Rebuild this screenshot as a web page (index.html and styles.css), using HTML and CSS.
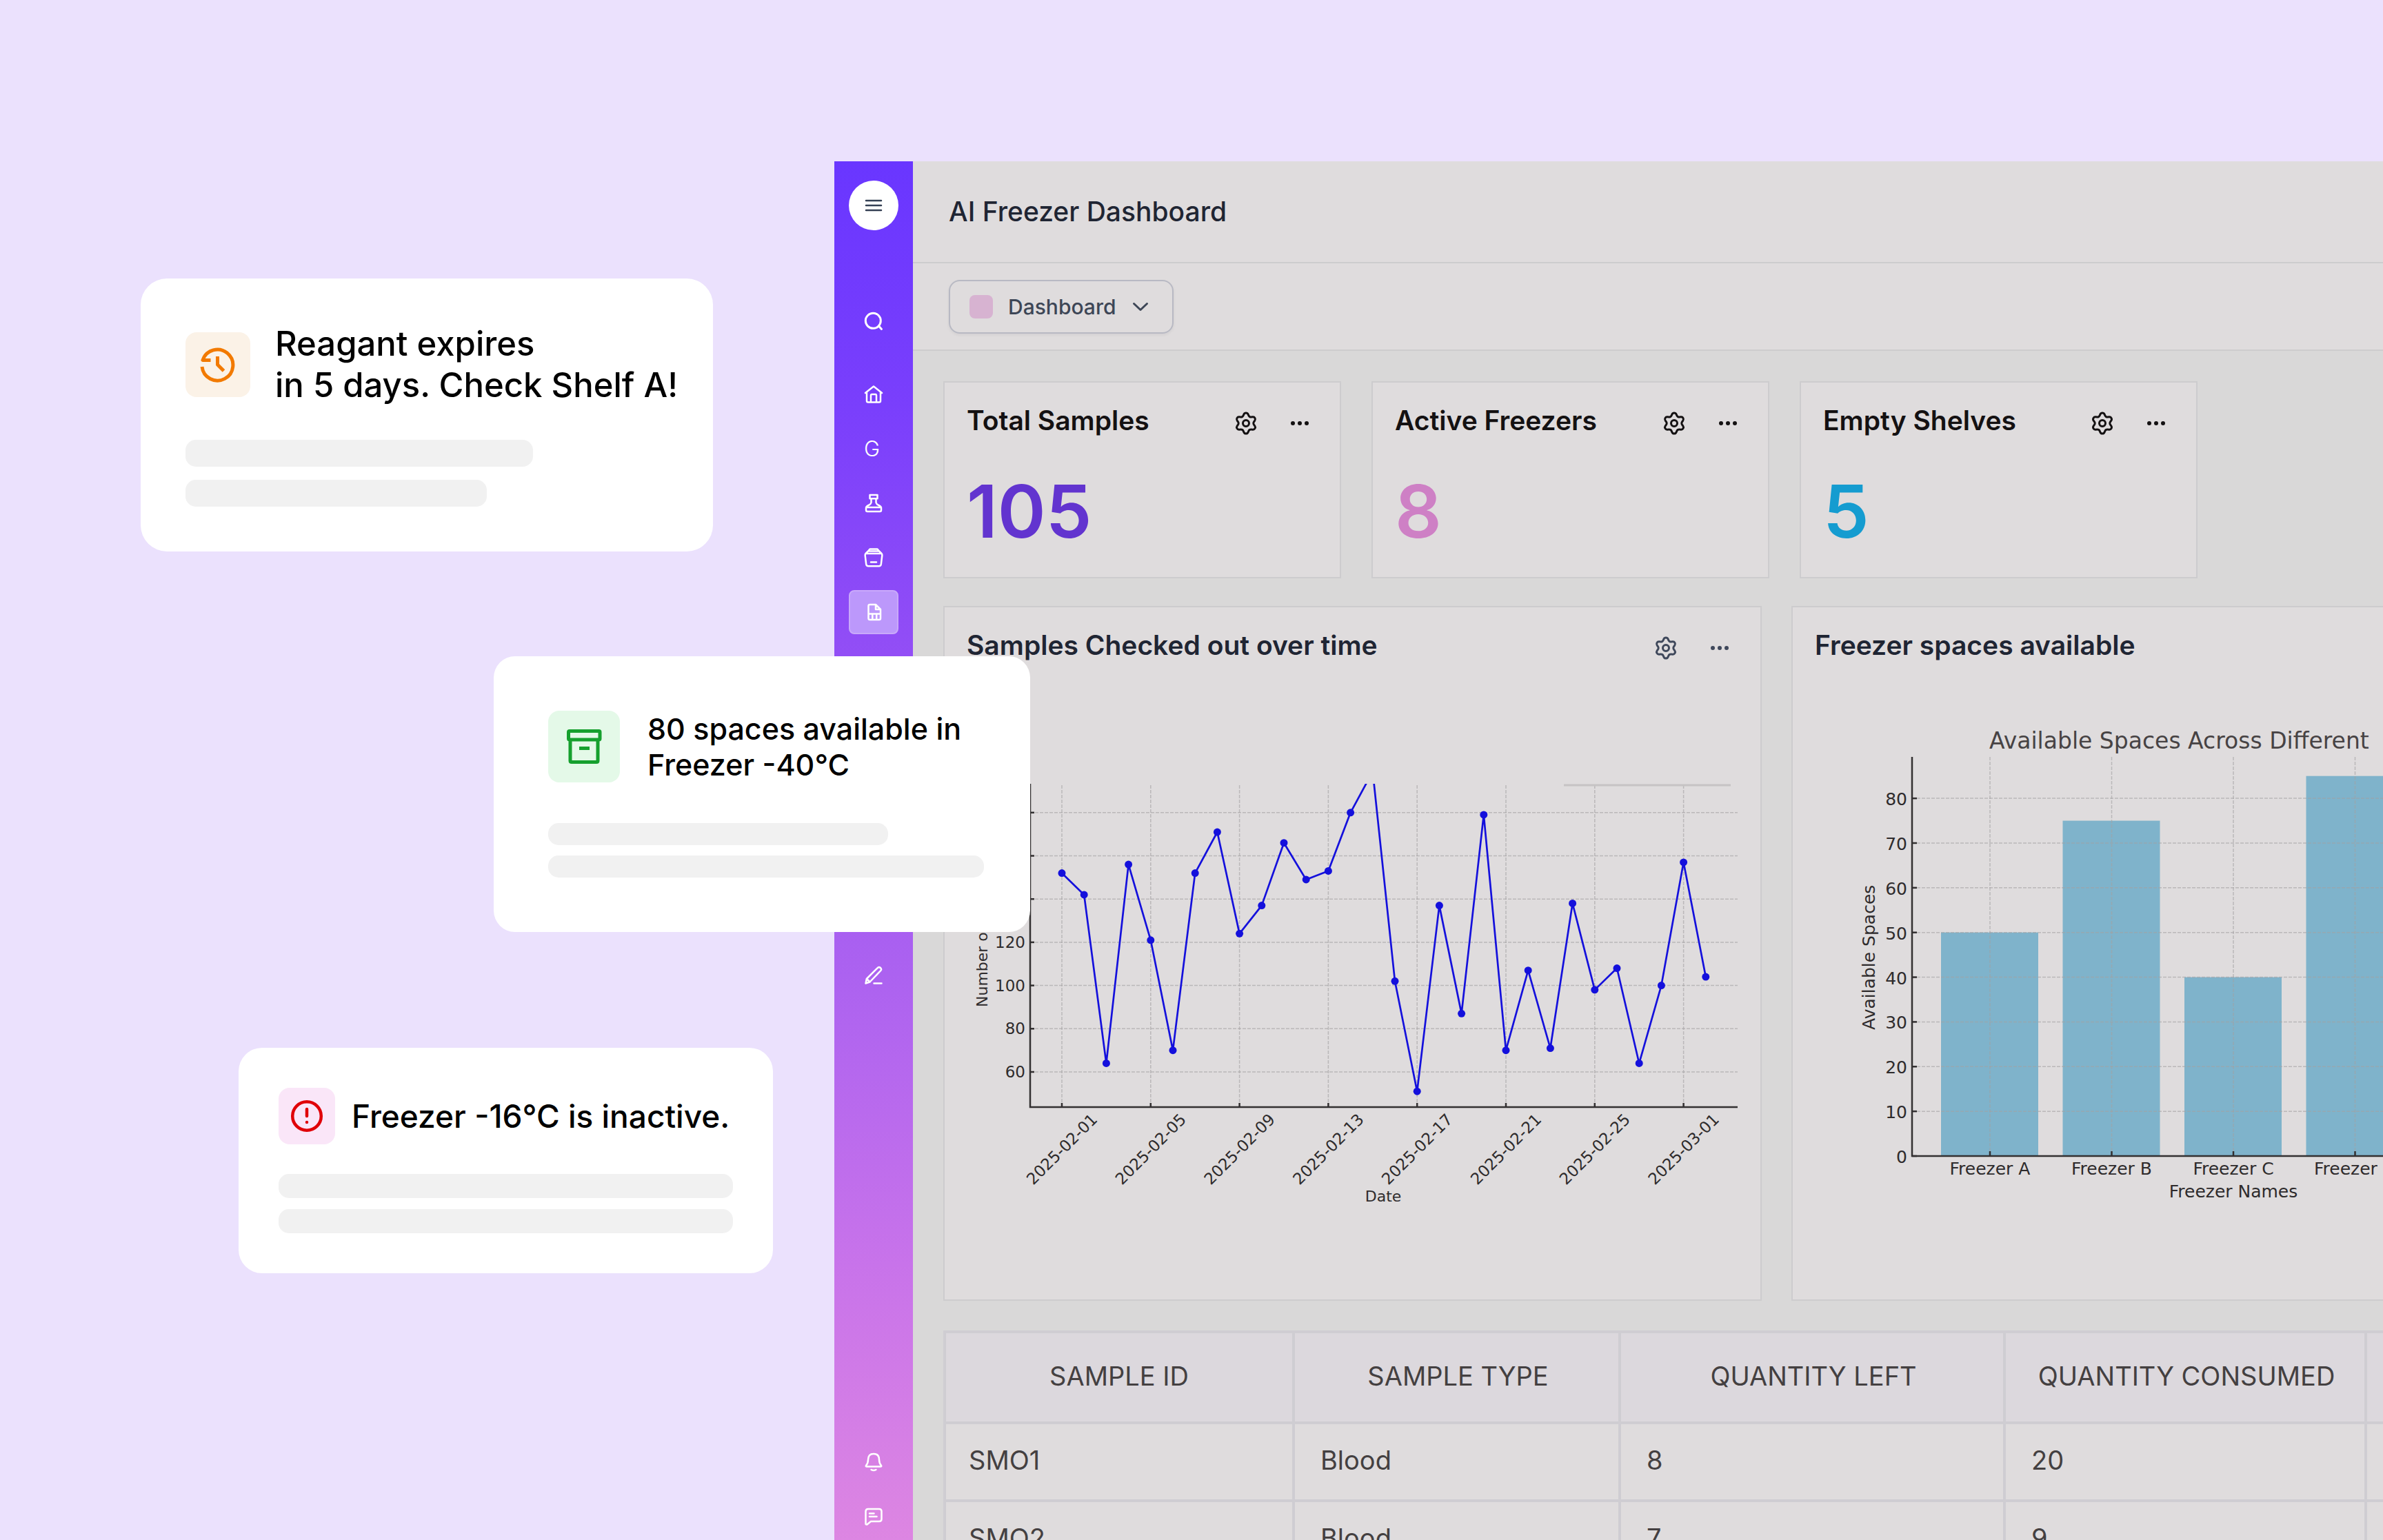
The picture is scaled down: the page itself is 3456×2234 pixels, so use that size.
FILE: index.html
```html
<!DOCTYPE html>
<html lang="en">
<head>
<meta charset="utf-8">
<meta name="viewport" content="width=device-width, initial-scale=1">
<title>AI Freezer Dashboard</title>
<link rel="stylesheet" href="styles.css">
</head>
<body>
<svg class="sprite" aria-hidden="true">
  <symbol id="gear" viewBox="0 0 24 24">
    <path d="M9.395 19.371l.585 1.315a2.214 2.214 0 0 0 4.044 0l.584-1.315a2.43 2.43 0 0 1 1-1.111 2.43 2.43 0 0 1 1.476-.312l1.43.152a2.214 2.214 0 0 0 2.149-1.094 2.214 2.214 0 0 0-.126-2.408l-.847-1.164A2.43 2.43 0 0 1 19.224 12c0-.513.163-1.014.464-1.429l.847-1.163a2.214 2.214 0 0 0 .126-2.408 2.214 2.214 0 0 0-2.149-1.094l-1.43.152a2.43 2.43 0 0 1-1.47-.312 2.43 2.43 0 0 1-1-1.117l-.588-1.315a2.214 2.214 0 0 0-4.044 0l-.585 1.315a2.43 2.43 0 0 1-1 1.117 2.43 2.43 0 0 1-1.47.312l-1.434-.152A2.214 2.214 0 0 0 3.342 7a2.214 2.214 0 0 0 .126 2.408l.847 1.163c.302.415.464.916.464 1.429s-.162 1.014-.464 1.429l-.847 1.163A2.214 2.214 0 0 0 3.342 17a2.214 2.214 0 0 0 2.149 1.094l1.43-.152a2.43 2.43 0 0 1 1.47.312c.444.257.796.648 1.004 1.117z"/>
    <circle cx="12" cy="12" r="3"/>
  </symbol>
  <symbol id="dots" viewBox="0 0 36 36">
    <circle cx="8" cy="18" r="3"/><circle cx="18" cy="18" r="3"/><circle cx="28" cy="18" r="3"/>
  </symbol>
</svg>

<div class="page">
  <aside class="alerts" aria-label="Alerts">
    <article class="alert alert-reagent">
      <div class="alert-head">
        <span class="alert-icon">
          <svg viewBox="0 0 94 94" aria-hidden="true"><path d="M24 50A22.500 22.500 0 1 0 25 40.500H36.500M46.500 35v12l9 9"/></svg>
        </span>
        <p class="alert-text">Reagant expires<br>in 5 days. Check Shelf A!</p>
      </div>
      <span class="bar bar-long"></span>
      <span class="bar bar-short"></span>
    </article>
    <article class="alert alert-space">
      <div class="alert-head">
        <span class="alert-icon">
          <svg viewBox="0 0 104 104" aria-hidden="true"><path d="M31 29.500h42.500q1.500 0 1.500 1.500v9.500q0 1.500-1.500 1.500H31q-1.500 0-1.500-1.500V31q0-1.500 1.500-1.500zM32 42v30.500q0 2 2 2h36q2 0 2-2V42M45 54.500h15"/></svg>
        </span>
        <p class="alert-text">80 spaces available in<br>Freezer -40°C</p>
      </div>
      <span class="bar bar-short"></span>
      <span class="bar bar-long"></span>
    </article>
    <article class="alert alert-inactive">
      <div class="alert-head">
        <span class="alert-icon">
          <svg viewBox="0 0 82 82" aria-hidden="true"><circle cx="41" cy="41" r="20.800"/><path d="M41 31v10M41 50v.1"/></svg>
        </span>
        <p class="alert-text">Freezer -16°C is inactive.</p>
      </div>
      <span class="bar bar-long"></span>
      <span class="bar bar-long"></span>
    </article>
  </aside>

  <div class="app">
    <nav class="sidebar" aria-label="Main">
      <button class="menu-button" type="button" aria-label="Menu">
        <svg viewBox="0 0 28 28" aria-hidden="true"><path d="M3 7h22M3 14h22M3 21h22"/></svg>
      </button>
      <a class="nav-item nav-search" href="#" aria-label="Search">
        <svg viewBox="0 0 28 28" aria-hidden="true"><circle cx="13.300" cy="13.300" r="11"/><path d="M21.500 21l4 4.500"/></svg>
      </a>
      <div class="nav-group">
        <a class="nav-item" href="#" aria-label="Home">
          <svg viewBox="0 0 28 28" aria-hidden="true"><path d="M2 12L14 2.500 26 12M4 11v12.500q0 2 2 2h16q2 0 2-2V11M10 25V15.500q0-1.500 1.500-1.500h5q1.500 0 1.500 1.500V25"/></svg>
        </a>
        <a class="nav-item" href="#"><span class="nav-letter">G</span></a>
        <a class="nav-item" href="#" aria-label="Samples">
          <svg viewBox="0 0 28 28" aria-hidden="true"><path d="M8.500 2h11v5.300h-11zM10.500 7.300V13q-.5 2-3 3.500-4.500 2-4.500 4.500v3q0 2 2 2h18q2 0 2-2v-3q0-2.500-4.500-4.500-2.500-1.500-3-3.500V7.300M3 20h22"/></svg>
        </a>
        <a class="nav-item" href="#" aria-label="Storage">
          <svg viewBox="0 0 28 28" aria-hidden="true"><path d="M8.500 1.500h11l2.500 3H6zM6 4.500L2.500 8h23L22 4.500M2.500 8q-1 1-.8 3l1.500 12.500q.5 2.800 3 2.800h15.600q2.500 0 3-2.800l1.500-12.500q.2-2-.8-3M10 20.500h8"/></svg>
        </a>
        <a class="nav-item nav-current" href="#" aria-label="Dashboards" aria-current="page">
          <svg viewBox="0 0 28 28" aria-hidden="true"><path d="M8.500 3h8.500l7 7v13q0 2-2 2H8.500q-2 0-2-2V5q0-2 2-2zM17 3v7h7M6.500 16.500H24M12.300 16.500V25M18.200 16.500V25"/></svg>
        </a>
        <a class="nav-item" href="#" aria-label="Reports">
          <svg viewBox="0 0 28 28" aria-hidden="true"><circle cx="14" cy="13.500" r="13"/></svg>
        </a>
      </div>
      <a class="nav-item nav-edit" href="#" aria-label="Edit">
        <svg viewBox="0 0 28 28" aria-hidden="true"><path d="M2.500 25.500l1.300-6.500L20 2.800q2-1.500 4 .2 2 2.200.3 4L8.500 23.500zM4 19l4.500 4.500M14.500 25.500h11"/></svg>
      </a>
      <div class="nav-group nav-bottom">
        <a class="nav-item" href="#" aria-label="Notifications">
          <svg viewBox="0 0 28 28" aria-hidden="true"><path d="M6 10.500Q6 2 14 2t8 8.500q0 5 3 8.500.8 1.500-1 1.500H4q-1.800 0-1-1.500 3-3.500 3-8.500zM10.500 25q3.500 2 7 0"/></svg>
        </a>
        <a class="nav-item" href="#" aria-label="Messages">
          <svg viewBox="0 0 28 28" aria-hidden="true"><path d="M6 3h16q3.500 0 3.500 3.500v11q0 3.500-3.500 3.500H10l-5.500 4.500q-1.800.5-2-1V6.500Q2.500 3 6 3zM8 9.500h6.500M8 14h10.500"/></svg>
        </a>
      </div>
    </nav>

    <main class="main">
      <header class="topbar"><h1 class="page-title">AI Freezer Dashboard</h1></header>
      <div class="toolbar">
        <button class="picker" type="button">
          <span class="swatch"></span>
          <span>Dashboard</span>
          <svg viewBox="0 0 24 24" aria-hidden="true"><path d="M2.500 7.500L12 16.500l9.500-9"/></svg>
        </button>
      </div>

      <div class="board">
        <section class="stats">
          <article class="card stat">
            <div class="card-head">
              <h2>Total Samples</h2>
              <div class="card-actions">
                <button type="button" aria-label="Settings"><svg class="gear"><use href="#gear"/></svg></button>
                <button type="button" aria-label="More"><svg class="dots"><use href="#dots"/></svg></button>
              </div>
            </div>
            <p class="stat-value violet">105</p>
          </article>
          <article class="card stat">
            <div class="card-head">
              <h2>Active Freezers</h2>
              <div class="card-actions">
                <button type="button" aria-label="Settings"><svg class="gear"><use href="#gear"/></svg></button>
                <button type="button" aria-label="More"><svg class="dots"><use href="#dots"/></svg></button>
              </div>
            </div>
            <p class="stat-value pink">8</p>
          </article>
          <article class="card stat">
            <div class="card-head">
              <h2>Empty Shelves</h2>
              <div class="card-actions">
                <button type="button" aria-label="Settings"><svg class="gear"><use href="#gear"/></svg></button>
                <button type="button" aria-label="More"><svg class="dots"><use href="#dots"/></svg></button>
              </div>
            </div>
            <p class="stat-value blue">5</p>
          </article>
        </section>

        <section class="charts">
          <article class="card chart-card">
            <div class="card-head">
              <h2>Samples Checked out over time</h2>
              <div class="card-actions">
                <button type="button" aria-label="Settings"><svg class="gear"><use href="#gear"/></svg></button>
                <button type="button" aria-label="More"><svg class="dots"><use href="#dots"/></svg></button>
              </div>
            </div>
            <svg id="line-chart" class="chart chart-line" viewBox="0 0 1183 922" role="img" aria-label="Samples checked out per day"></svg>
          </article>
          <article class="card chart-card">
            <div class="card-head"><h2>Freezer spaces available</h2></div>
            <svg id="bar-chart" class="chart chart-bar" viewBox="0 0 1183 922" role="img" aria-label="Available spaces per freezer"></svg>
          </article>
        </section>

        <table class="samples">
          <colgroup><col class="col-id"><col class="col-type"><col class="col-left"><col class="col-used"><col></colgroup>
          <thead>
            <tr><th scope="col">SAMPLE ID</th><th scope="col">SAMPLE TYPE</th><th scope="col">QUANTITY LEFT</th><th scope="col">QUANTITY CONSUMED</th><td></td></tr>
          </thead>
          <tbody>
            <tr><td>SMO1</td><td>Blood</td><td>8</td><td>20</td><td></td></tr>
            <tr><td>SMO2</td><td>Blood</td><td>7</td><td>9</td><td></td></tr>
          </tbody>
        </table>
      </div>
    </main>
  </div>
</div>
<script src="charts.js"></script>
</body>
</html>
```
FILE: styles.css
```css
* { box-sizing: border-box; }

body {
  margin: 0;
  background: #ebe1fd;
  color: #000;
  font-family: Inter, "Liberation Sans", sans-serif;
  overflow: hidden;
}

h1, h2, p { margin: 0; }
button { padding: 0; border: 0; background: none; color: inherit; font: inherit; }
svg { display: block; }
.sprite { position: absolute; width: 0; height: 0; }

.page {
  display: grid;
  grid-template-columns: 1210px minmax(0, 1fr);
  height: 100vh;
  overflow: hidden;
}

/* Alerts */
.alerts {
  position: relative;
  z-index: 1;
  display: flex;
  flex-direction: column;
  align-items: flex-start;
}
.alert {
  flex: none;
  display: flex;
  flex-direction: column;
  background: #fff;
}
.alert-head { display: flex; align-items: center; }
.alert-icon { flex: none; border-radius: 16px; }
.alert-icon svg { width: 100%; fill: none; stroke: currentColor; stroke-linejoin: round; }
.alert-text { font-weight: 500; white-space: nowrap; }
.bar { background: #f1f1f1; border-radius: 15px; }

.alert-reagent { width: 830px; margin: 404px 0 0 204px; padding: 65px; border-radius: 38px; }
.alert-reagent .alert-head { gap: 36px; margin-bottom: 49px; }
.alert-reagent .alert-icon { width: 94px; background: #fbf2e7; color: #f27a00; }
.alert-reagent .alert-icon svg { stroke-width: 5; }
.alert-reagent .alert-text { font-size: 49px; line-height: 60px; }
.alert-reagent .bar { height: 39px; }
.alert-reagent .bar-long { width: 504px; margin-bottom: 19px; }
.alert-reagent .bar-short { width: 437px; }

.alert-space { width: 778px; margin: 152px 0 0 716px; padding: 79px; border-radius: 31px; }
.alert-space .alert-head { gap: 40px; margin-bottom: 59px; }
.alert-space .alert-icon { width: 104px; background: #e4f9e8; color: #16a02e; }
.alert-space .alert-icon svg { stroke-width: 5; }
.alert-space .alert-text { font-size: 43px; line-height: 52px; }
.alert-space .bar { height: 32px; }
.alert-space .bar-short { width: 493px; margin-bottom: 15px; }
.alert-space .bar-long { width: 632px; }

.alert-inactive { width: 775px; margin: 168px 0 0 346px; padding: 58px; border-radius: 34px; }
.alert-inactive .alert-head { gap: 24px; margin-bottom: 43px; }
.alert-inactive .alert-icon { width: 82px; background: #fae6f8; color: #e00208; }
.alert-inactive .alert-icon svg { stroke-width: 4.5; stroke-linecap: round; }
.alert-inactive .alert-text { font-size: 46px; line-height: 60px; }
.alert-inactive .bar { height: 35px; }
.alert-inactive .bar + .bar { margin-top: 16px; }

/* App window */
.app {
  display: flex;
  min-width: 0;
  margin-top: 234px;
  overflow: hidden;
}
.sidebar {
  flex: none;
  display: flex;
  flex-direction: column;
  align-items: center;
  width: 114px;
  padding: 28px 0 2px;
  background: linear-gradient(178deg, #6936ff 0%, #7a3ffc 18%, #944ff5 37%, #ac62f0 59%, #c873ea 80%, #dd86e2 100%);
  color: #fff;
}
.sidebar svg {
  width: 28px;
  height: 28px;
  fill: none;
  stroke: currentColor;
  stroke-width: 2.5;
  stroke-linecap: round;
  stroke-linejoin: round;
}
.menu-button {
  display: grid;
  place-items: center;
  flex: none;
  width: 72px;
  height: 72px;
  border-radius: 50%;
  background: #fff;
  color: #344054;
}
.nav-item {
  flex: none;
  display: grid;
  place-items: center;
  width: 72px;
  height: 64px;
  border: 2px solid transparent;
  border-radius: 8px;
  color: #fff;
  text-decoration: none;
}
.nav-current { background: #bc98fb; border-color: #c9a9fa; }
.nav-letter { width: 28px; font-size: 31px; line-height: 40px; font-weight: 300; }
.nav-search { margin-top: 100px; }
.nav-search svg { stroke-width: 3; }
.nav-group { display: flex; flex-direction: column; gap: 15px; margin-top: 42px; }
.nav-edit { margin-top: 384px; }
.nav-bottom { margin-top: auto; }

.main { flex: 1; min-width: 0; background: #d9d8d8; overflow: hidden; }
.topbar, .toolbar {
  display: flex;
  align-items: center;
  padding: 0 52px;
  background: #dfdcdd;
  border-bottom: 2px solid #cdcccd;
}
.topbar { height: 148px; }
.toolbar { height: 127px; }
.page-title { color: #1f2533; font-size: 39px; line-height: 46px; font-weight: 500; }
.picker {
  display: flex;
  align-items: center;
  height: 78px;
  padding: 0 34px 0 28px;
  border: 2px solid #b8b9c3;
  border-radius: 16px;
  box-shadow: 0 2px 4px rgba(16, 24, 40, 0.06);
  color: #3d4656;
  font-size: 30px;
  line-height: 36px;
  font-weight: 500;
}
.swatch { width: 34px; height: 34px; margin-right: 22px; border-radius: 8px; background: #d7b3d1; }
.picker svg {
  width: 24px;
  height: 24px;
  margin-left: 24px;
  fill: none;
  stroke: currentColor;
  stroke-width: 3;
  stroke-linecap: round;
  stroke-linejoin: round;
}

/* Board */
.board { padding: 44px; }
.stats { display: flex; gap: 44px; margin-bottom: 40px; }
.card { background: #dfdcdd; border: 2px solid #cdccce; }
.card-head {
  display: flex;
  align-items: center;
  justify-content: space-between;
  padding: 0 40px 0 32px;
}
.card h2 { font-size: 39px; line-height: 54px; font-weight: 600; white-space: nowrap; }
.card-actions { display: flex; gap: 42px; padding-top: 8px; }
.card-actions svg { width: 36px; height: 36px; }
.gear { fill: none; stroke: currentColor; stroke-width: 2; stroke-linejoin: round; }
.dots { fill: currentColor; }

.stat { flex: 0 0 577px; padding: 28px 0 39px; color: #141112; }
.stat-value { margin-top: 49px; padding-left: 32px; font-size: 106px; line-height: 112px; font-weight: 600; }
.violet { color: #6234cf; }
.pink { color: #ce80c5; }
.blue { color: #159cd0; }

.charts {
  display: grid;
  grid-template-columns: repeat(2, minmax(1187px, 1fr));
  gap: 43px;
  margin-bottom: 43px;
}
.chart-card { padding-top: 28px; color: #1f2533; }
.chart-card .card-head { padding-right: 41px; }
.chart-card .card-actions { color: #3f485b; }
.chart { width: 100%; font-family: "DejaVu Sans", sans-serif; fill: #2e2b2c; }
.chart-line { font-size: 22px; }
.chart-line .tick { font-size: 23px; }
.chart-bar { font-size: 25px; }
.chart-title { font-size: 33px; fill: #474344; }
.axis { fill: none; stroke: #333031; stroke-width: 2.5; }
.grid { fill: none; stroke: #a3a0a1; stroke-opacity: 0.6; stroke-width: 1.5; stroke-dasharray: 5 2; }
.series { fill: none; stroke: #1410dc; stroke-width: 2.7; stroke-linejoin: round; }
.marker { fill: #1410dc; }
.column { fill: #7fb3cb; }
.legend-edge { stroke: #c6c3c4; stroke-width: 3; }

/* Samples table */
.samples {
  width: 2417px;
  table-layout: fixed;
  border-collapse: collapse;
  background: #dfdcdd;
  color: #444041;
  font-size: 38px;
  line-height: 46px;
}
.samples th, .samples td { padding: 0 33px 5px 37px; border: 4px solid #cfcdd2; }
.samples thead th, .samples thead td { height: 132px; padding: 0 0 5px 4px; background: #dcd8dd; font-weight: 400; text-align: center; }
.samples tbody td { height: 113px; text-align: left; }
.samples tbody td:first-child { padding-left: 33px; }
.samples thead th:first-child { padding-left: 0; }
.col-id { width: 506px; }
.col-type { width: 473px; }
.col-left { width: 558px; }
.col-used { width: 524px; }
```
FILE: charts.js
```js
const NS = 'http://www.w3.org/2000/svg';

function add(parent, name, attrs, text) {
  const el = document.createElementNS(NS, name);
  for (const key in attrs) el.setAttribute(key, attrs[key]);
  if (text !== undefined) el.textContent = text;
  parent.appendChild(el);
  return el;
}

function path(parent, cls, d) {
  return add(parent, 'path', { class: cls, d });
}

function drawLineChart() {
  const svg = document.getElementById('line-chart');
  const left = 124, right = 1150, top = 174, bottom = 643;
  const days = [152, 142, 64, 156, 121, 70, 152, 171, 124, 137, 166, 149, 153, 180, 199,
    102, 51, 137, 87, 179, 70, 107, 71, 138, 98, 108, 64, 100, 157, 104];
  const dates = ['2025-02-01', '2025-02-05', '2025-02-09', '2025-02-13',
    '2025-02-17', '2025-02-21', '2025-02-25', '2025-03-01'];
  const x = i => 170 + i * 32.2;
  const y = v => 592 - (v - 60) * 3.135;

  for (let v = 60; v <= 180; v += 20) {
    path(svg, 'grid', `M${left} ${y(v)}H${right}`);
    path(svg, 'axis', `M${left} ${y(v)}h6`);
    add(svg, 'text', { class: 'tick', x: 117, y: y(v) + 8, 'text-anchor': 'end' }, v);
  }
  dates.forEach((date, i) => {
    const cx = x(i * 4);
    path(svg, 'grid', `M${cx} ${bottom}V${top}`);
    path(svg, 'axis', `M${cx} ${bottom}v-6`);
    add(svg, 'text', {
      class: 'tick', x: cx, y: 712, 'text-anchor': 'middle', transform: `rotate(-45 ${cx} 704)`
    }, date);
  });
  path(svg, 'axis', `M${left} ${top}V${bottom}H${right}`);
  path(svg, 'legend-edge', `M898 ${top + 2}H1140`);

  const clip = add(svg, 'clipPath', { id: 'plot-area' });
  add(clip, 'rect', { x: left, y: top, width: right - left, height: bottom - top });
  const plot = add(svg, 'g', { 'clip-path': 'url(#plot-area)' });
  path(plot, 'series', 'M' + days.map((v, i) => `${x(i)} ${y(v)}`).join('L'));
  days.forEach((v, i) => add(plot, 'circle', { class: 'marker', cx: x(i), cy: y(v), r: 5.5 }));

  add(svg, 'text', { x: 636, y: 780, 'text-anchor': 'middle' }, 'Date');
  add(svg, 'text', { x: 62, y: 498, transform: 'rotate(-90 62 498)' }, 'Number of Samples');
}

function drawBarChart() {
  const svg = document.getElementById('bar-chart');
  const left = 173, right = 1105, top = 135, bottom = 714;
  const freezers = [['Freezer A', 50], ['Freezer B', 75], ['Freezer C', 40], ['Freezer D', 85]];
  const x = i => 286 + i * 176.5;
  const y = v => bottom - v * 6.486;

  freezers.forEach(([, v], i) => {
    add(svg, 'rect', { class: 'column', x: x(i) - 71, y: y(v), width: 141, height: bottom - y(v) });
  });
  for (let v = 0; v <= 80; v += 10) {
    if (v) path(svg, 'grid', `M${left} ${y(v)}H${right}`);
    path(svg, 'axis', `M${left} ${y(v)}h7`);
    add(svg, 'text', { x: 166, y: y(v) + 10, 'text-anchor': 'end' }, v);
  }
  freezers.forEach(([name], i) => {
    path(svg, 'grid', `M${x(i)} ${bottom}V${top}`);
    path(svg, 'axis', `M${x(i)} ${bottom}v-7`);
    add(svg, 'text', { x: x(i), y: 741, 'text-anchor': 'middle' }, name);
  });
  path(svg, 'axis', `M${left} ${top}V${bottom}H${right}`);

  add(svg, 'text', { class: 'chart-title', x: 285, y: 123 }, 'Available Spaces Across Different');
  add(svg, 'text', { x: 639, y: 774, 'text-anchor': 'middle' }, 'Freezer Names');
  add(svg, 'text', { x: 119, y: 531, transform: 'rotate(-90 119 531)' }, 'Available Spaces');
}

drawLineChart();
drawBarChart();
```
